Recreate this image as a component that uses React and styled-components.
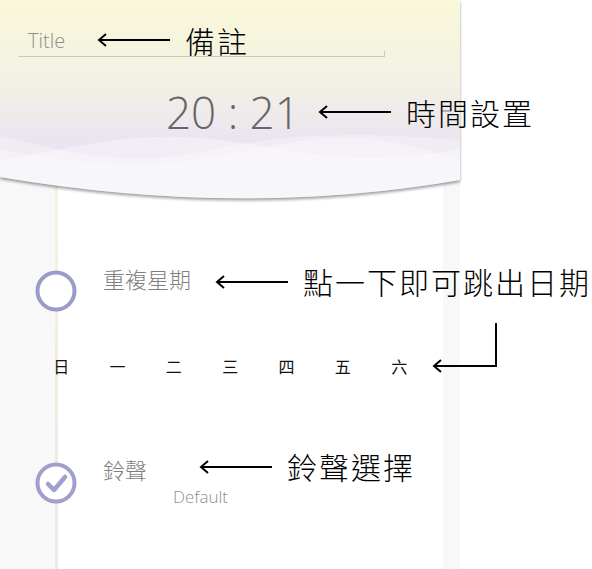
import React from "react";
import styled, { createGlobalStyle } from "styled-components";

const GlobalStyle = createGlobalStyle`
    html, body {
        margin: 0;
        padding: 0;
        background: #ffffff;
    }
    body {
        font-family: "Open Sans", "Noto Sans CJK TC", sans-serif;
    }
`;

const WEEK = ["日", "一", "二", "三", "四", "五", "六"];

function Arrow() {
    return (
        <ArrowSvg width="74" height="14" viewBox="0 0 74 14">
            <line x1="2" y1="7" x2="73" y2="7" stroke="#000" strokeWidth="2" />
            <polyline points="9,1 2,7 9,13" fill="none" stroke="#000" strokeWidth="2" />
        </ArrowSvg>
    );
}

function BentArrow() {
    return (
        <BentSvg width="68" height="92" viewBox="0 0 68 92">
            <polyline points="65,3 65,46 3,46" fill="none" stroke="#000" strokeWidth="2" />
            <polyline points="10,40 3,46 10,52" fill="none" stroke="#000" strokeWidth="2" />
        </BentSvg>
    );
}

function Callout({ text }) {
    return (
        <CalloutWrap>
            <Arrow />
            <CalloutText>{text}</CalloutText>
        </CalloutWrap>
    );
}

function HeaderBackground() {
    return (
        <HeaderSvg width="460" height="210" viewBox="0 0 460 210">
            <defs>
                <linearGradient id="sky" x1="0" y1="0" x2="0" y2="1">
                    <stop offset="0" stopColor="#f9f8d8" />
                    <stop offset="0.4" stopColor="#f3f1e4" />
                    <stop offset="0.65" stopColor="#ebe5f0" />
                    <stop offset="1" stopColor="#e8e2f3" />
                </linearGradient>
                <clipPath id="shape">
                    <path d="M0,0 H460 V180 Q240,218 0,177 Z" />
                </clipPath>
            </defs>
            <g clipPath="url(#shape)">
                <rect x="0" y="0" width="460" height="210" fill="url(#sky)" />
                <path d="M0,136 C60,150 120,168 200,152 S330,130 460,140 V210 H0 Z" fill="#ffffff" opacity="0.3" />
                <path d="M0,160 C70,150 120,132 200,138 S330,170 460,150 V210 H0 Z" fill="#ffffff" opacity="0.35" />
                <path d="M0,150 C90,165 160,170 250,150 S380,135 460,160 V210 H0 Z" fill="#ffffff" opacity="0.3" />
            </g>
        </HeaderSvg>
    );
}

export default function App() {
    return (
        <>
            <GlobalStyle />
            <Canvas>
                <Header>
                    <HeaderBackground />
                    <Field>
                        <Placeholder>Title</Placeholder>
                        <Callout text="備註" />
                    </Field>
                    <TimeRow>
                        <Time>20 : 21</Time>
                        <Callout text="時間設置" />
                    </TimeRow>
                </Header>
                <Body>
                    <OptionRow $top={90}>
                        <Bullet $offset={4}>
                            <svg width="42" height="42" viewBox="0 0 42 42">
                                <circle cx="21" cy="21" r="18.5" fill="#fff" stroke="#9b9bcb" strokeWidth="4" />
                            </svg>
                        </Bullet>
                        <OptionLine>
                            <OptionLabel $shift={-3}>重複星期</OptionLabel>
                            <Callout text="點一下即可跳出日期" />
                        </OptionLine>
                    </OptionRow>
                    <WeekRow>
                        {WEEK.map((d) => (
                            <Day key={d}>{d}</Day>
                        ))}
                        <BentArrow />
                    </WeekRow>
                    <OptionRow $top={75}>
                        <Bullet $offset={11}>
                            <svg width="42" height="42" viewBox="0 0 42 42">
                                <circle cx="21" cy="21" r="18.5" fill="#fff" stroke="#a09fcd" strokeWidth="4" />
                                <polyline points="13,22 19,28 30,15" fill="none" stroke="#a09fcd" strokeWidth="4.5" strokeLinecap="round" strokeLinejoin="round" />
                            </svg>
                        </Bullet>
                        <OptionColumn>
                            <OptionLine>
                                <OptionLabel $shift={3}>鈴聲</OptionLabel>
                                <RingCallout>
                                    <Callout text="鈴聲選擇" />
                                </RingCallout>
                            </OptionLine>
                            <SubValue>Default</SubValue>
                        </OptionColumn>
                    </OptionRow>
                </Body>
            </Canvas>
        </>
    );
}

const Canvas = styled.div`
    width: 592px;
    height: 569px;
    overflow: hidden;
    display: flex;
    flex-direction: column;
    background: #ffffff;
`;

const Header = styled.div`
    position: relative;
    z-index: 1;
    height: 200px;
    padding-top: 24px;
    box-sizing: border-box;
    display: flex;
    flex-direction: column;
`;

const HeaderSvg = styled.svg`
    position: absolute;
    left: 0;
    top: 0;
    z-index: -1;
    filter: drop-shadow(0 2px 1.5px rgba(0, 0, 0, 0.38));
`;

const Field = styled.div`
    position: relative;
    margin-left: 18px;
    width: 367px;
    height: 33px;
    box-sizing: border-box;
    border-bottom: 1px solid #c9c8c0;
    display: flex;
    align-items: center;
    &::after {
        content: "";
        position: absolute;
        right: 0;
        bottom: 0;
        width: 1px;
        height: 5px;
        background: #c9c8c0;
    }
`;

const Placeholder = styled.span`
    padding-left: 10px;
    width: 69px;
    font-family: "Open Sans", sans-serif;
    font-weight: 300;
    font-size: 20px;
    color: #8e8e8e;
`;

const TimeRow = styled.div`
    display: flex;
    align-items: center;
    margin-top: 31px;
    padding-left: 166px;
`;

const Time = styled.span`
    width: 152px;
    font-family: "Open Sans", sans-serif;
    font-weight: 300;
    font-size: 44px;
    line-height: 48px;
    color: #666666;
`;

const CalloutWrap = styled.div`
    display: flex;
    align-items: center;
    gap: 14px;
`;

const ArrowSvg = styled.svg`
    flex: none;
    display: block;
`;

const BentSvg = styled.svg`
    flex: none;
    display: block;
    margin: -36px 0 -36px 4px;
`;

const CalloutText = styled.span`
    font-family: "Noto Sans CJK TC", sans-serif;
    font-weight: 300;
    font-size: 30px;
    line-height: 31px;
    letter-spacing: 2px;
    color: #000000;
    white-space: nowrap;
`;

const Body = styled.div`
    margin-top: -24px;
    flex: 1;
    display: flex;
    flex-direction: column;
    background:
        linear-gradient(to bottom, #f6f3da, #efe6e8) 55px 0 / 3px 100% no-repeat,
        linear-gradient(to right, #f8f8f8 0 55px, #ffffff 55px 443px, #f8f8f8 443px 460px, #ffffff 460px);
`;

const OptionRow = styled.div`
    display: flex;
    align-items: flex-start;
    margin-top: ${(props) => props.$top}px;
    padding-left: 35px;
`;

const Bullet = styled.div`
    flex: none;
    width: 42px;
    height: 42px;
    margin-top: ${(props) => props.$offset}px;
    svg {
        display: block;
    }
`;

const OptionLine = styled.div`
    display: flex;
    align-items: flex-start;
    gap: 24px;
`;

const OptionColumn = styled.div`
    display: flex;
    flex-direction: column;
`;

const OptionLabel = styled.span`
    margin-left: 26px;
    margin-top: ${(props) => props.$shift || 0}px;
    font-family: "Noto Sans CJK TC", sans-serif;
    font-weight: 300;
    font-size: 22px;
    line-height: 31px;
    color: #7f7f7f;
    white-space: nowrap;
`;

const RingCallout = styled.div`
    margin-left: 28px;
`;

const SubValue = styled.span`
    margin-left: 96px;
    margin-top: 2px;
    font-family: "Open Sans", sans-serif;
    font-weight: 300;
    font-size: 17px;
    line-height: 20px;
    color: #8f8f8f;
`;

const WeekRow = styled.div`
    display: flex;
    align-items: center;
    margin-top: 44px;
    padding-left: 33px;
`;

const Day = styled.span`
    width: 56.33px;
    text-align: center;
    font-family: "Noto Sans CJK TC", sans-serif;
    font-size: 16px;
    line-height: 20px;
    color: #111111;
`;
